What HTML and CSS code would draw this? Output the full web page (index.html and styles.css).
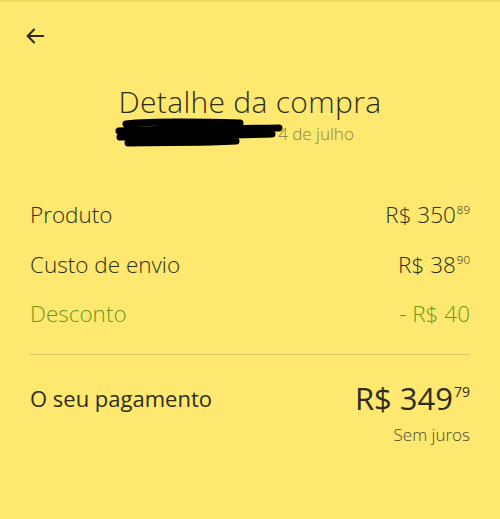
FILE: index.html
```html
<!DOCTYPE html>
<html lang="pt">
<head>
    <meta charset="UTF-8">
    <meta name="viewport" content="width=device-width, initial-scale=1.0">
    <title>Detalhe da compra</title>
    <link rel="stylesheet" href="styles.css">
</head>
<body>
    <div class="screen">
        <div class="topbar">
            <svg class="back" width="22" height="22" viewBox="0 0 24 24">
                <path d="M21 12H4M11 5l-7 7 7 7" fill="none" stroke="#2b2a1c" stroke-width="2.2" stroke-linecap="round" stroke-linejoin="round"/>
            </svg>
        </div>
        <div class="header">
            <h1>Detalhe da compra</h1>
            <div class="date">
                <svg class="blot" width="170" height="32" viewBox="0 0 170 32">
                    <path d="M12 7 C40 4 90 5 126 6 M5 14 C50 11 110 12 165 11 M6 20 C50 18 110 19 158 17 M14 26 C50 25 90 26 122 24" fill="none" stroke="#000" stroke-width="7" stroke-linecap="round"/>
                </svg>
                <span>4 de julho</span>
            </div>
        </div>
        <div class="rows">
            <div class="row">
                <span>Produto</span>
                <span class="price">R$ 350<sup>89</sup></span>
            </div>
            <div class="row">
                <span>Custo de envio</span>
                <span class="price">R$ 38<sup>90</sup></span>
            </div>
            <div class="row discount">
                <span>Desconto</span>
                <span class="price">- R$ 40</span>
            </div>
        </div>
        <div class="total">
            <span class="label">O seu pagamento</span>
            <div class="amount">
                <span class="big">R$ 349<sup>79</sup></span>
                <span class="note">Sem juros</span>
            </div>
        </div>
    </div>
</body>
</html>
```
FILE: styles.css
```css
body {
    margin: 0;
    font-family: "Open Sans", "Liberation Sans", sans-serif;
    background: #fee86f;
    color: #2f2d1e;
}
.screen {
    width: 500px;
    height: 519px;
    box-sizing: border-box;
    border-top: 2px solid #f2d95c;
}
.topbar {
    height: 80px;
    padding: 23px 0 0 24px;
    box-sizing: border-box;
}
.back {
    display: block;
}
.header {
    text-align: center;
}
.header h1 {
    margin: 0;
    font-size: 30px;
    font-weight: 300;
    line-height: 40px;
    letter-spacing: 0.3px;
}
.date {
    display: flex;
    justify-content: center;
    align-items: center;
    height: 30px;
    margin-top: -4px;
    padding-right: 24px;
    color: #8a8250;
    font-size: 17px;
    font-weight: 300;
}
.blot {
    margin-right: -6px;
    margin-left: -8px;
}
.rows {
    padding: 42px 30px 0;
}
.row {
    display: flex;
    justify-content: space-between;
    align-items: center;
    height: 49.5px;
    font-size: 22.5px;
    font-weight: 300;
}
.price sup {
    font-size: 11.5px;
    vertical-align: top;
    position: relative;
    top: 3px;
    margin-left: 1px;
}
.discount {
    color: #6c981c;
}
.total {
    margin: 15px 30px 0;
    border-top: 1px solid #d4c468;
    display: flex;
    justify-content: space-between;
    padding-top: 22px;
}
.label {
    font-size: 22px;
    line-height: 42px;
    font-weight: 400;
}
.amount {
    display: flex;
    flex-direction: column;
    align-items: flex-end;
}
.big {
    font-size: 31px;
    line-height: 42px;
}
.big sup {
    font-size: 14px;
    line-height: 1;
    vertical-align: top;
    position: relative;
    top: 8px;
    margin-left: 1px;
}
.note {
    font-size: 17px;
    font-weight: 300;
    margin-top: 4px;
    color: #4d4a30;
}
```
